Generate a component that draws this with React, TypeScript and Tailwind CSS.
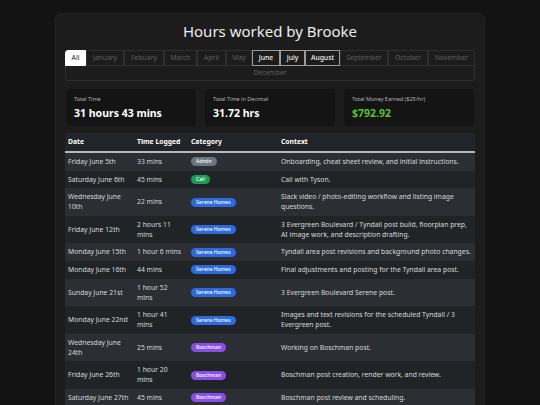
type Entry = {
  date: string;
  time: string;
  category: "Admin" | "Call" | "Serene Homes" | "Boschman";
  context: string;
};

const months = [
  { name: "All", w: "w-[21px]", state: "active" },
  { name: "January", w: "w-[38px]", state: "off" },
  { name: "Febuary", w: "w-[40px]", state: "off" },
  { name: "March", w: "w-[33px]", state: "off" },
  { name: "April", w: "w-[29px]", state: "off" },
  { name: "May", w: "w-[26px]", state: "off" },
  { name: "June", w: "w-[28px]", state: "on" },
  { name: "July", w: "w-[25px]", state: "on" },
  { name: "August", w: "w-[35px]", state: "on" },
  { name: "September", w: "w-[48px]", state: "off" },
  { name: "October", w: "w-[40px]", state: "off" },
  { name: "November", w: "w-[47px]", state: "off" },
];

const entries: Entry[] = [
  { date: "Friday June 5th", time: "33 mins", category: "Admin", context: "Onboarding, cheat sheet review, and initial instructions." },
  { date: "Saturday June 6th", time: "45 mins", category: "Call", context: "Call with Tyson." },
  { date: "Wednesday June 10th", time: "22 mins", category: "Serene Homes", context: "Slack video / photo-editing workflow and listing image questions." },
  { date: "Friday June 12th", time: "2 hours 11 mins", category: "Serene Homes", context: "3 Evergreen Boulevard / Tyndall post build, floorplan prep, AI image work, and description drafting." },
  { date: "Monday June 15th", time: "1 hour 6 mins", category: "Serene Homes", context: "Tyndall area post revisions and background photo changes." },
  { date: "Monday June 16th", time: "44 mins", category: "Serene Homes", context: "Final adjustments and posting for the Tyndall area post." },
  { date: "Sunday June 21st", time: "1 hour 52 mins", category: "Serene Homes", context: "3 Evergreen Boulevard Serene post." },
  { date: "Monday June 22nd", time: "1 hour 41 mins", category: "Serene Homes", context: "Images and text revisions for the scheduled Tyndall / 3 Evergreen post." },
  { date: "Wednesday June 24th", time: "25 mins", category: "Boschman", context: "Working on Boschman post." },
  { date: "Friday June 26th", time: "1 hour 20 mins", category: "Boschman", context: "Boschman post creation, render work, and review." },
  { date: "Saturday June 27th", time: "45 mins", category: "Boschman", context: "Boschman post review and scheduling." },
];

const badgeColor: Record<Entry["category"], string> = {
  Admin: "bg-[#6c757d]",
  Call: "bg-[#1f9a58]",
  "Serene Homes": "bg-[#2d6ae0]",
  Boschman: "bg-[#8a4ee6]",
};

function Badge({ category }: { category: Entry["category"] }) {
  return (
    <span
      className={`inline-block rounded-full px-[5px] py-[1px] align-middle text-[5px] leading-[7px] font-medium text-white ${badgeColor[category]}`}
    >
      {category}
    </span>
  );
}

function Stat({ label, value, green }: { label: string; value: string; green?: boolean }) {
  return (
    <div className="flex-1 rounded-[4px] bg-[#141414] px-[8px] pt-[7px] pb-[6px]">
      <div className="text-[5.5px] leading-[7px] text-[#b5b5b5]">{label}</div>
      <div className={`mt-[3px] text-[10.5px] leading-[14px] font-bold ${green ? "text-[#5cc22a]" : "text-white"}`}>
        {value}
      </div>
    </div>
  );
}

export default function App() {
  return (
    <div className="min-h-[405px] bg-[#131313] pt-[13px] font-['Noto_Sans',sans-serif]">
      <div className="mx-auto w-[430px] rounded-t-[6px] border border-b-0 border-[#242424] bg-[#1c1c1c] px-[9px] pt-[6px]">
        <h1 className="text-center text-[15px] leading-[22px] text-[#ececec]">Hours worked by Brooke</h1>

        {/* month filter */}
        <div className="mt-[8px] flex flex-wrap">
          {months.map((m, i) => (
            <button
              key={m.name}
              className={[
                "h-[16px] border text-[6.8px] leading-[14px]",
                m.w,
                i === 0 ? "rounded-tl-[3px]" : "",
                i === months.length - 1 ? "rounded-tr-[3px]" : "",
                m.state === "active"
                  ? "border-white bg-white text-[#1c1c1c]"
                  : m.state === "on"
                  ? "border-[#9a9a9a] font-medium text-[#f2f2f2]"
                  : "border-[#2f2f2f] text-[#5f5f5f]",
              ].join(" ")}
            >
              {m.name}
            </button>
          ))}
          <button className="h-[15px] w-full rounded-b-[3px] border border-t-0 border-[#2f2f2f] text-[6.8px] leading-[14px] text-[#5f5f5f]">
            December
          </button>
        </div>

        {/* totals */}
        <div className="mt-[8px] flex gap-[9px] px-[1px]">
          <Stat label="Total Time" value="31 hours 43 mins" />
          <Stat label="Total Time in Decimal" value="31.72 hrs" />
          <Stat label="Total Money Earned ($25/hr)" value="$792.92" green />
        </div>

        <table className="mt-[7px] w-full table-fixed border-collapse text-[6.8px] leading-[9.75px] text-[#d8dadc]">
          <colgroup>
            <col className="w-[69px]" />
            <col className="w-[54px]" />
            <col className="w-[90px]" />
            <col />
          </colgroup>
          <thead>
            <tr className="border-b-2 border-[#b8b8b8] bg-[#212428] text-left font-bold text-white">
              <th className="px-[3px] py-[4px] font-bold">Date</th>
              <th className="px-[3px] py-[4px] font-bold">Time Logged</th>
              <th className="px-[3px] py-[4px] font-bold">Category</th>
              <th className="px-[3px] py-[4px] font-bold">Context</th>
            </tr>
          </thead>
          <tbody>
            {entries.map((e, i) => (
              <tr key={e.date} className={i % 2 === 0 ? "bg-[#2b2e32]" : "bg-[#212427]"}>
                <td className="px-[3px] py-[4px] align-middle">{e.date}</td>
                <td className="py-[4px] pr-[6px] pl-[3px] align-middle">{e.time}</td>
                <td className="px-[3px] py-[4px] align-middle leading-[7px]">
                  <Badge category={e.category} />
                </td>
                <td className="px-[3px] py-[4px] align-middle">{e.context}</td>
              </tr>
            ))}
          </tbody>
        </table>
      </div>
    </div>
  );
}
